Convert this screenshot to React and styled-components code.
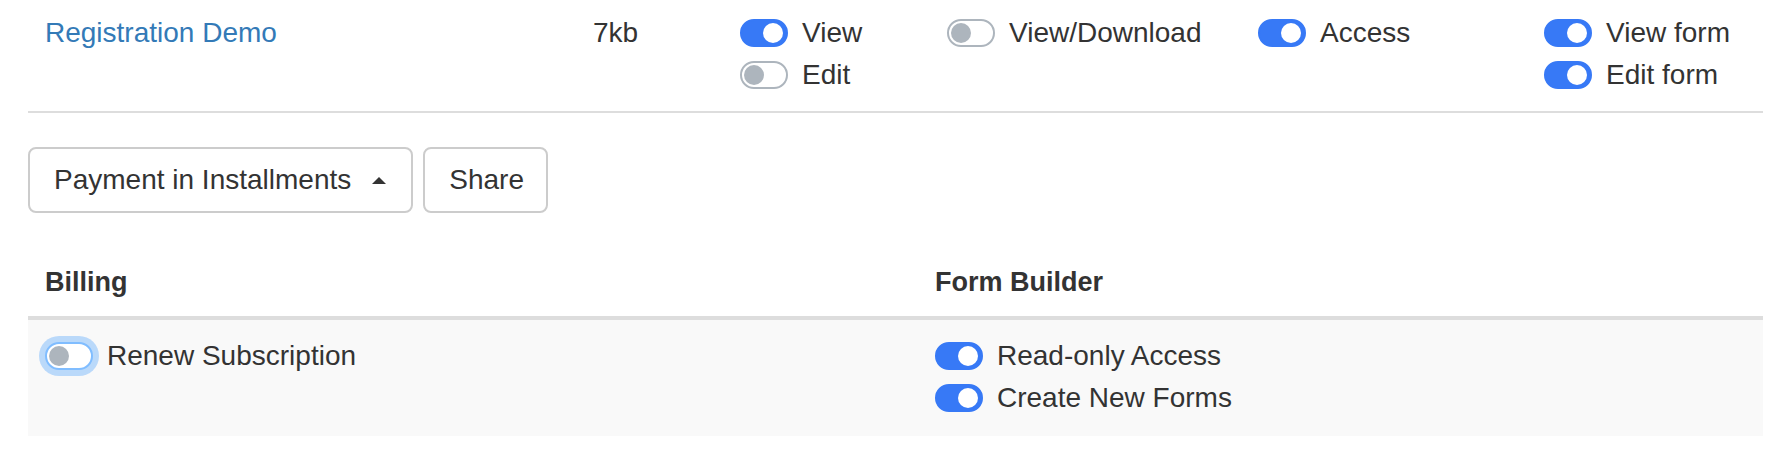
import React from 'react'
import styled, { createGlobalStyle } from 'styled-components'

const GlobalStyle = createGlobalStyle`
  body {
    margin: 0;
    background: #fff;
    color: #333;
    font-family: "Liberation Sans", Arial, Helvetica, sans-serif;
    font-size: 28px;
    line-height: 42px;
  }
`

const Page = styled.div`
  padding: 0 23px 0 28px;
`

const FileRow = styled.div`
  display: grid;
  grid-template-columns: 548px 147px 207px 311px 286px 236px;
  border-bottom: 2px solid #ddd;
`

const Cell = styled.div`
  padding: 12px 17px 15px;
  display: flex;
  flex-direction: column;
  align-items: flex-start;
`

const NameLink = styled.a`
  color: #337ab7;
  text-decoration: none;
`

const Toolbar = styled.div`
  display: flex;
  gap: 10px;
  margin-top: 34px;
`

const Button = styled.button`
  display: inline-flex;
  align-items: center;
  height: 66px;
  padding: 0 22px 0 24px;
  border: 2px solid #ccc;
  border-radius: 8px;
  background: #fff;
  color: #333;
  font-family: inherit;
  font-size: 28px;
  line-height: 42px;
`

const Caret = styled.span`
  display: inline-block;
  width: 0;
  height: 0;
  margin: 0 3px 0 21px;
  border-left: 7px solid transparent;
  border-right: 7px solid transparent;
  border-bottom: 7px solid #333;
`

const PermTable = styled.div`
  display: grid;
  grid-template-columns: 890px 845px;
  margin-top: 27px;
`

const HeadCell = styled.div`
  padding: 21px 17px 13px;
  font-weight: bold;
  font-size: 27px;
  border-bottom: 4px solid #ddd;
`

const BodyCell = styled.div`
  padding: 15px 17px 17px;
  background: #f9f9f9;
  display: flex;
  flex-direction: column;
  align-items: flex-start;
`

const SwitchLabel = styled.label`
  display: inline-flex;
  align-items: center;
  gap: 14px;
  white-space: nowrap;
`

const Track = styled.span`
  position: relative;
  flex: none;
  box-sizing: border-box;
  width: 48px;
  height: 28px;
  border-radius: 14px;
  border: 2px solid ${p => (p.$on ? '#3779f6' : p.$focus ? '#80bdff' : '#adb5bd')};
  background: ${p => (p.$on ? '#3779f6' : '#fff')};
  box-shadow: ${p => (p.$focus ? '0 0 0 6px rgba(0, 123, 255, 0.25)' : 'none')};

  &::after {
    content: '';
    position: absolute;
    top: 2px;
    left: ${p => (p.$on ? '21px' : '2px')};
    width: 20px;
    height: 20px;
    border-radius: 50%;
    background: ${p => (p.$on ? '#fff' : '#adb5bd')};
  }
`

const Switch = ({ on, focus, children }) => (
  <SwitchLabel>
    <Track $on={on} $focus={focus} />
    {children}
  </SwitchLabel>
)

const App = () => (
  <Page>
    <GlobalStyle />
    <FileRow>
      <Cell>
        <NameLink href="#">Registration Demo</NameLink>
      </Cell>
      <Cell>7kb</Cell>
      <Cell>
        <Switch on>View</Switch>
        <Switch>Edit</Switch>
      </Cell>
      <Cell>
        <Switch>View/Download</Switch>
      </Cell>
      <Cell>
        <Switch on>Access</Switch>
      </Cell>
      <Cell>
        <Switch on>View form</Switch>
        <Switch on>Edit form</Switch>
      </Cell>
    </FileRow>

    <Toolbar>
      <Button>
        Payment in Installments
        <Caret />
      </Button>
      <Button>Share</Button>
    </Toolbar>

    <PermTable>
      <HeadCell>Billing</HeadCell>
      <HeadCell>Form Builder</HeadCell>
      <BodyCell>
        <Switch focus>Renew Subscription</Switch>
      </BodyCell>
      <BodyCell>
        <Switch on>Read-only Access</Switch>
        <Switch on>Create New Forms</Switch>
      </BodyCell>
    </PermTable>
  </Page>
)

export default App
